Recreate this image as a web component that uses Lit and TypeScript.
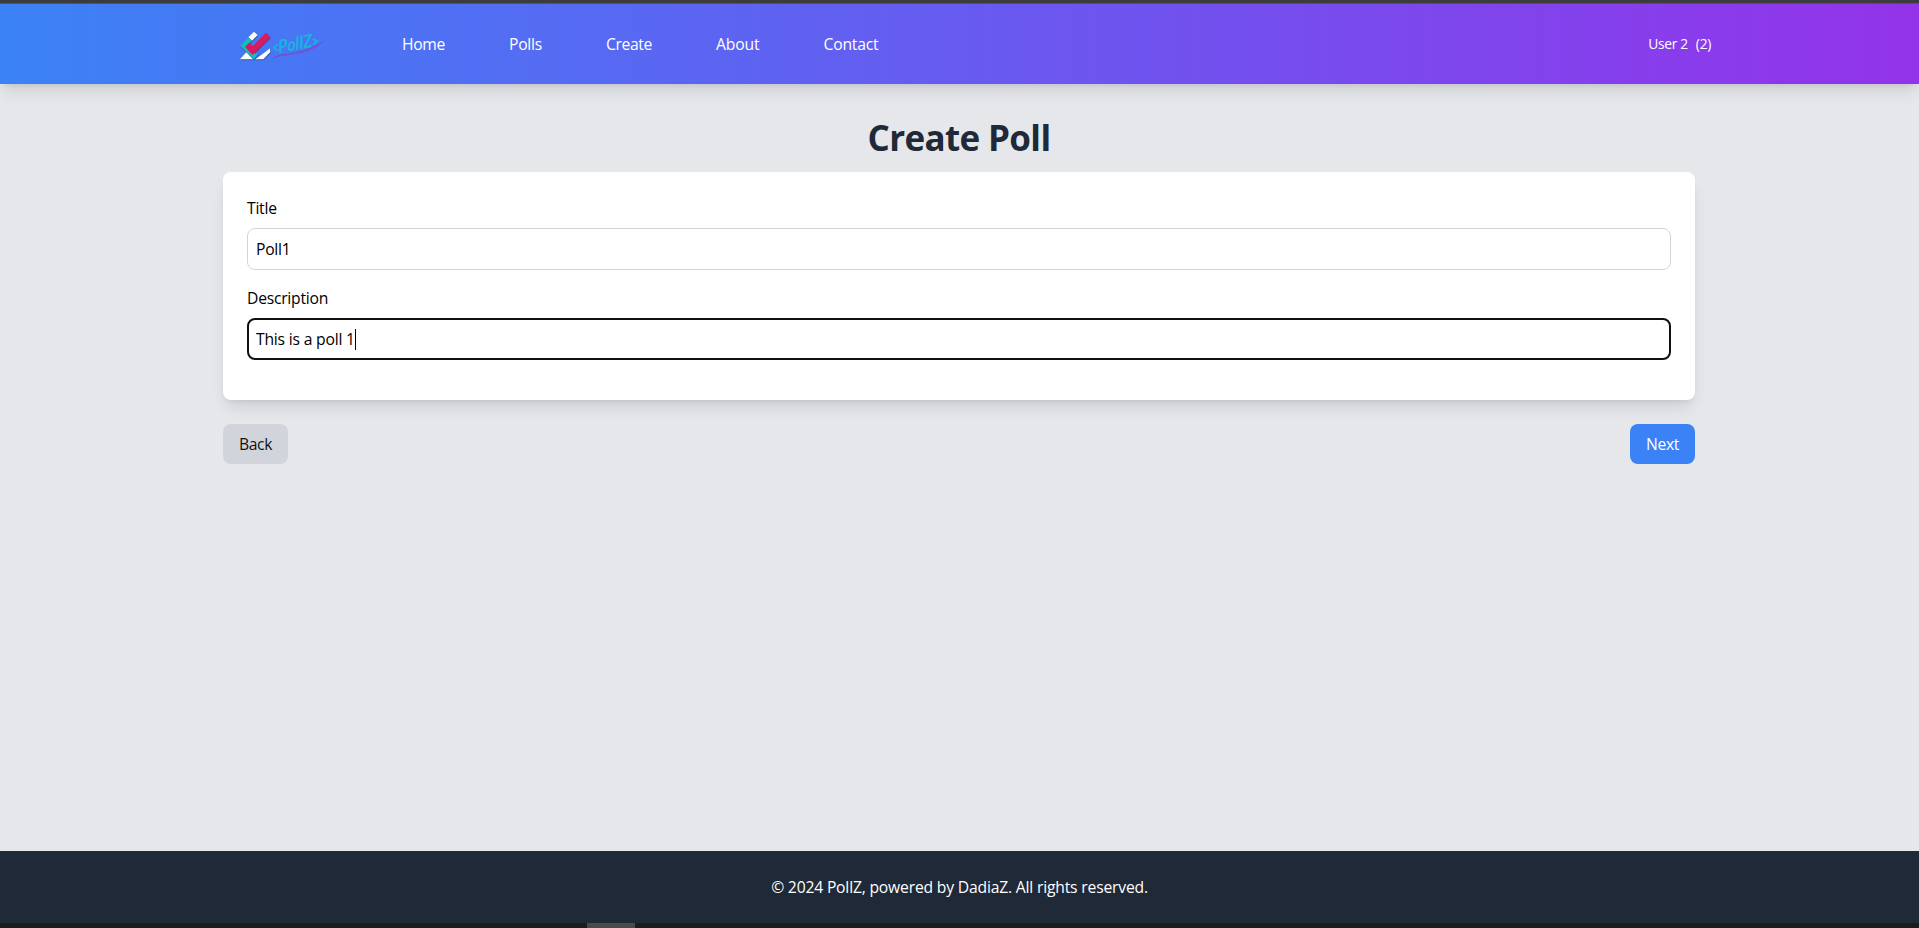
import { LitElement, html, css, svg } from "lit";
import { customElement, property } from "lit/decorators.js";
import { styleMap } from "lit/directives/style-map.js";

interface NavLink {
  label: string;
  tracking: number;
}

const LINKS: NavLink[] = [
  { label: "Home", tracking: -0.34 },
  { label: "Polls", tracking: -0.26 },
  { label: "Create", tracking: -0.38 },
  { label: "About", tracking: -0.12 },
  { label: "Contact", tracking: -0.22 },
];

const logo = svg`
  <g class="shade">
    <path fill="#fff" d="M28 31 45 14 56 24 39 41Z"/>
    <path fill="#fff" d="M3 97 22 76 42 97Z"/>
    <path fill="#fff" d="M82 73 93 64 94 75 73 97H49Z"/>
    <path fill="#12bcc0" d="M3 56 29 31 39 41 24 57 42 75 53 86 43 96Z"/>
    <path fill="#12bcc0" d="M40 82 60 77 46 97 41 96Z"/>
    <path fill="#db1a5e" d="M18 59 30 47 41 58 81 17 94 31 40 84Z"/>
  </g>
  <path fill="#8048cc" stroke="#8048cc" stroke-width="1" d="M102 94C118 80 140 83 164 78C196 72 226 60 254 42C232 66 196 76 164 81C140 85 120 86 102 94Z"/>
  <path class="mark" d="M115 53 104 63 115 70M223 36 235 42 224 52"/>
  <text class="script" transform="translate(119 79) rotate(-11) skewX(-6)" x="0" y="0" textLength="104" lengthAdjust="spacingAndGlyphs">PollZ</text>`;

@customElement("poll-header")
export class PollHeader extends LitElement {
  static styles = css`
    :host {
      display: block;
      flex: none;
      box-sizing: border-box;
      height: 80px;
      padding-right: 1px;
      background: linear-gradient(to right, #3b82f6, #9333ea);
      box-shadow: 0 10px 15px -3px rgba(0, 0, 0, 0.1), 0 4px 6px -4px rgba(0, 0, 0, 0.1);
      color: #fff;
    }
    .bar {
      box-sizing: border-box;
      width: 1536px;
      height: 80px;
      margin: 0 auto;
      padding: 0 16px;
      display: flex;
      align-items: center;
    }
    .logo {
      display: block;
      flex: none;
      width: 90px;
      height: 34px;
      margin-left: 32px;
      overflow: visible;
    }
    .shade {
      filter: drop-shadow(1px 2px 1px rgba(30, 30, 60, 0.6));
    }
    .script {
      font: italic 700 54px Lato, sans-serif;
      fill: #16b4e0;
    }
    .mark {
      fill: none;
      stroke: #16b4e0;
      stroke-width: 5px;
      stroke-linecap: round;
    }
    nav {
      display: flex;
      gap: 64px;
      margin-left: 73px;
      flex: 1;
    }
    a {
      color: inherit;
      text-decoration: none;
    }
    .user {
      display: flex;
      gap: 8px;
      font-size: 13.8px;
      line-height: 20px;
      letter-spacing: -0.3px;
    }
  `;
  render() {
    return html`<div class="bar">
      <svg class="logo" viewBox="0 0 270 102">${logo}</svg>
      <nav>
        ${LINKS.map(
          (l) => html`<a style=${styleMap({ letterSpacing: `${l.tracking}px` })}>${l.label}</a>`,
        )}
      </nav>
      <div class="user"><span>User 2</span><span>(2)</span></div>
    </div>`;
  }
}

@customElement("poll-field")
export class PollField extends LitElement {
  @property() label = "";
  @property() value = "";
  @property({ type: Boolean }) active = false;
  static styles = css`
    :host {
      display: block;
      margin-bottom: 16px;
    }
    .label {
      display: block;
      margin-bottom: 8px;
      letter-spacing: -0.25px;
    }
    .box {
      box-sizing: border-box;
      display: flex;
      align-items: center;
      height: 42px;
      padding: 0 8px;
      border: 1px solid #d1d5db;
      border-radius: 8px;
      background: #fff;
      letter-spacing: -0.25px;
    }
    .box.active {
      border: 2px solid #101010;
      padding: 0 7px;
      letter-spacing: -0.2px;
    }
    .caret {
      width: 1px;
      height: 21px;
      background: #000;
    }
  `;
  render() {
    return html`<span class="label">${this.label}</span>
      <div class="box ${this.active ? "active" : ""}">
        <span>${this.value}</span>${this.active ? html`<i class="caret"></i>` : null}
      </div>`;
  }
}

@customElement("app-root")
export class AppRoot extends LitElement {
  static styles = css`
    :host {
      display: flex;
      flex-direction: column;
      height: 928px;
      overflow: hidden;
      background: #e5e7eb;
      color: #000;
      font: 15.7px/24px "Open Sans", sans-serif;
    }
    .top-edge {
      flex: none;
      box-sizing: border-box;
      height: 4px;
      background: #3c3c3c;
      border-bottom: 1px solid #56565a;
    }
    main {
      flex: none;
      box-sizing: border-box;
      width: 1536px;
      margin: 0 auto;
      padding: 32px;
    }
    .frame {
      flex: 1;
      display: flex;
      padding-right: 1px;
    }
    h1 {
      margin: 0 0 14px;
      padding-top: 2px;
      font-size: 35px;
      line-height: 40px;
      font-weight: 700;
      letter-spacing: -0.65px;
      text-align: center;
      color: #1f2937;
    }
    .card {
      padding: 24px;
      height: 180px;
      border-radius: 8px;
      background: #fff;
      box-shadow: 0 10px 15px -3px rgba(0, 0, 0, 0.1), 0 4px 6px -4px rgba(0, 0, 0, 0.1);
    }
    .actions {
      display: flex;
      justify-content: space-between;
      margin-top: 24px;
    }
    button {
      width: 65px;
      height: 40px;
      padding: 0;
      border: 0;
      border-radius: 8px;
      font: inherit;
      letter-spacing: -0.38px;
      background: #d1d5db;
      color: #111;
    }
    button.next {
      background: #3b82f6;
      color: #fff;
    }
    footer {
      flex: none;
      height: 72px;
      line-height: 72px;
      text-align: center;
      background: #1f2937;
      color: #fff;
      letter-spacing: -0.19px;
    }
    .bottom-edge {
      flex: none;
      height: 5px;
      background: #1c1c1c;
    }
    .thumb {
      width: 48px;
      height: 5px;
      margin-left: 587px;
      background: #4b4b4b;
    }
  `;
  render() {
    return html`
      <div class="top-edge"></div>
      <poll-header></poll-header>
      <div class="frame">
        <main>
          <h1>Create Poll</h1>
          <div class="card">
            <poll-field label="Title" value="Poll1"></poll-field>
            <poll-field label="Description" value="This is a poll 1" active></poll-field>
          </div>
          <div class="actions">
            <button>Back</button>
            <button class="next">Next</button>
          </div>
        </main>
      </div>
      <footer>© 2024 PollZ, powered by DadiaZ. All rights reserved.</footer>
      <div class="bottom-edge"><div class="thumb"></div></div>
    `;
  }
}
